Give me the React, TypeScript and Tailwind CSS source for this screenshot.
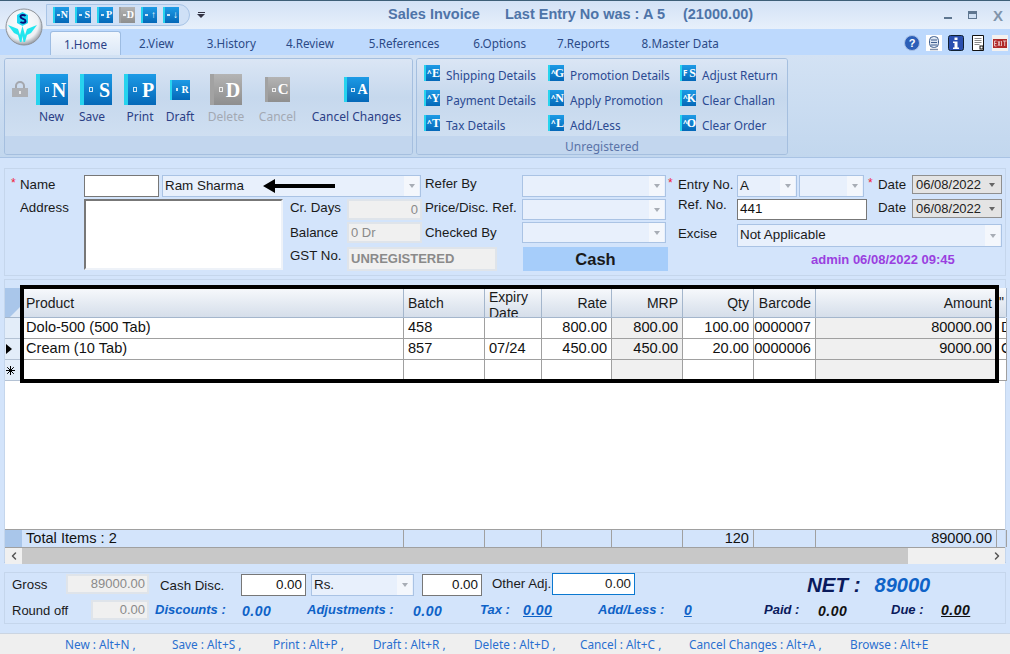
import React from "react";
import { ChevronLeft, ChevronRight } from "lucide-react";

const sans = "font-['Liberation_Sans',Arial,sans-serif]";
const ui = "font-['Noto_Sans',sans-serif]";

const Book = ({ letter, box, text, gray }: { letter: string; box: string; text: string; gray?: boolean }) => (
  <div className={`relative flex shrink-0 items-center justify-end overflow-hidden ${box} ${gray ? "bg-gradient-to-b from-[#b4b4b4] to-[#8e8e8e]" : "bg-gradient-to-b from-[#1d9be6] to-[#0568b8]"}`}>
    <div className={`absolute left-0 top-0 h-full w-[12%] ${gray ? "bg-[#a2a2a2]" : "bg-[#27d3ee]"}`} />
    <div className="absolute left-[28%] top-[43%] h-[16%] w-[14%] border border-white/80" />
    <span className={`pr-[6%] font-['Liberation_Serif',serif] font-bold leading-none text-white ${text}`}>{letter}</span>
  </div>
);

const BigButton = ({ label, letter, box, text, wrap, gray, labelBox = "" }: { label: string; letter: string; box: string; text: string; wrap: string; gray?: boolean; labelBox?: string }) => (
  <div className={`flex shrink-0 flex-col items-center ${wrap}`}>
    <div className="flex h-[31px] items-center">
      <Book letter={letter} box={box} text={text} gray={gray} />
    </div>
    <span className={`mt-[3px] whitespace-nowrap text-[12px] leading-[17px] ${gray ? "text-[#a3a9b3]" : "text-[#2b3f86]"} ${labelBox}`}>{label}</span>
  </div>
);

const SmallAction = ({ label, letter, hat = "^" }: { label: string; letter: string; hat?: string }) => (
  <div className="flex h-[16px] items-start">
    <div className="relative flex h-[16px] w-[16px] shrink-0 items-center justify-end overflow-hidden bg-gradient-to-b from-[#1d9be6] to-[#0568b8]">
      <div className="absolute left-0 top-0 h-full w-[2px] bg-[#27d3ee]" />
      <span className="absolute left-[3px] top-[1px] text-[8px] font-bold leading-[14px] text-white">{hat}</span>
      <span className="font-['Liberation_Serif',serif] text-[12px] font-bold leading-none text-white">{letter}</span>
    </div>
    <span className="ml-[6px] mt-[1px] whitespace-nowrap text-[11.8px] leading-[18px] text-[#2b4a92]">{label}</span>
  </div>
);

const Combo = ({ box, value = "" }: { box: string; value?: string }) => (
  <div className={`flex shrink-0 items-center justify-between border border-[#aac3e4] bg-[#e8f0fc] pl-[2px] pr-[1px] text-[13.4px] text-[#1a1a1a] ${box}`}>
    <span className="whitespace-nowrap">{value}</span>
    <span className="flex h-full w-[15px] items-center justify-center bg-[#f4f7fc]">
      <span className="h-0 w-0 border-x-[3px] border-t-[4px] border-x-transparent border-t-[#a8adb5]" />
    </span>
  </div>
);

const DateBox = ({ value }: { value: string }) => (
  <div className="flex h-[19px] w-[90px] shrink-0 items-center justify-between border border-[#8f8f8f] bg-[#e4e4e4] pl-[3px] pr-[6px] text-[13px] text-[#222]">
    <span>{value}</span>
    <span className="h-0 w-0 border-x-[3px] border-t-[4px] border-x-transparent border-t-[#666]" />
  </div>
);

const ReadOnly = ({ box, children }: { box: string; children: React.ReactNode }) => (
  <div className={`flex shrink-0 items-center border-2 border-[#dfe4ea] bg-[#f0f0f0] px-[2px] text-[13px] text-[#8a8a8a] ${box}`}>{children}</div>
);

const WhiteInput = ({ box, children }: { box: string; children?: React.ReactNode }) => (
  <div className={`flex shrink-0 items-center justify-end border border-[#777] bg-white pr-[3px] text-[13.4px] text-[#111] ${box}`}>{children}</div>
);

const Star = ({ box }: { box: string }) => <span className={`shrink-0 text-[12px] leading-[10px] text-[#f0203a] ${box}`}>*</span>;

const gridCols = "grid grid-cols-[17px_382px_81px_57px_70px_71px_71px_62px_181px_10px]";

const Head = ({ children, right, className = "" }: { children?: React.ReactNode; right?: boolean; className?: string }) => (
  <div className={`flex overflow-hidden border-r border-[#a4b6cc] bg-gradient-to-b from-[#f7f9fc] to-[#d5deea] px-[4px] text-[14px] text-[#1a1a1a] ${right ? "justify-end" : ""} ${className || "items-center pt-[1px]"}`}>{children}</div>
);

const Cell = ({ children, right, gray }: { children?: React.ReactNode; right?: boolean; gray?: boolean }) => (
  <div className={`flex h-[21px] items-center overflow-hidden whitespace-nowrap border-b border-r border-[#a0a0a0] pb-[1px] text-[14.6px] text-[#111] ${right ? "justify-end pr-[4px]" : "pl-[4px]"} ${gray ? "bg-[#f0f0f0]" : "bg-white"}`}>{children}</div>
);

const RowHead = ({ children }: { children?: React.ReactNode }) => (
  <div className="flex h-[21px] items-center justify-start border-b border-r border-[#b4c2d4] bg-[#e3edf9] pl-[1px] text-[#111]">{children}</div>
);

const Foot = ({ children, right }: { children?: React.ReactNode; right?: boolean }) => (
  <div className={`flex h-[17px] items-center overflow-hidden whitespace-nowrap border-r border-[#a0a0a0] text-[14.6px] leading-none text-[#111] ${right ? "justify-end pr-[4px]" : "pl-[4px]"}`}>{children}</div>
);

const rows = [
  { product: "Dolo-500 (500 Tab)", batch: "458", expiry: "", rate: "800.00", mrp: "800.00", qty: "100.00", code: "0000007", amount: "80000.00", extra: "D" },
  { product: "Cream (10 Tab)", batch: "857", expiry: "07/24", rate: "450.00", mrp: "450.00", qty: "20.00", code: "0000006", amount: "9000.00", extra: "C" },
  { product: "", batch: "", expiry: "", rate: "", mrp: "", qty: "", code: "", amount: "", extra: "" },
];

const tabs = [
  { label: "2.View", box: "ml-[18px]" },
  { label: "3.History", box: "ml-[33px]" },
  { label: "4.Review", box: "ml-[30px]" },
  { label: "5.References", box: "ml-[35px]" },
  { label: "6.Options", box: "ml-[34px]" },
  { label: "7.Reports", box: "ml-[31px]" },
  { label: "8.Master Data", box: "ml-[32px]" },
];

const shortcuts = [
  { label: "New : Alt+N ,", box: "w-[107px]" },
  { label: "Save : Alt+S ,", box: "w-[101px]" },
  { label: "Print : Alt+P ,", box: "w-[100px]" },
  { label: "Draft : Alt+R ,", box: "w-[101px]" },
  { label: "Delete : Alt+D ,", box: "w-[106px]" },
  { label: "Cancel : Alt+C ,", box: "w-[109px]" },
  { label: "Cancel Changes : Alt+A ,", box: "w-[161px]" },
  { label: "Browse : Alt+E", box: "" },
];

const Logo = () => (
  <svg width="38" height="38" viewBox="0 0 38 38" className="absolute left-[5px] top-[8px]">
    <defs>
      <radialGradient id="ball" cx="45%" cy="40%" r="60%">
        <stop offset="0%" stopColor="#ffffff" />
        <stop offset="75%" stopColor="#eef1f5" />
        <stop offset="100%" stopColor="#9aa0a8" />
      </radialGradient>
    </defs>
    <circle cx="19" cy="19" r="18" fill="url(#ball)" stroke="#8d9299" strokeWidth="1" />
    <path d="M17.5 4l5.500 3v8l-5.500 3-5.500-3V7z" fill="#1dd6f2" />
    <path d="M20.500 8c-1-1.500-5-1.500-5 .8 0 2.600 5 1.600 5 4.200 0 2.300-4 2.300-5 .8" fill="none" stroke="#06107a" strokeWidth="2" />
    <path d="M3 17L13 21 15 27 17.500 18 20 27 22 21 32 17 26 25 22 27 20 34H18.500L17.500 28 16.500 34H15L13 27 9 25z" fill="#22e6ee" />
  </svg>
);

const Triangle = () => <div className="h-0 w-0 border-y-[5.5px] border-l-[6px] border-y-transparent border-l-black" />;

const QatIcon = ({ letter, gray }: { letter: string; gray?: boolean }) => <Book letter={letter} box="h-[16px] w-[16px]" text="text-[10px]" gray={gray} />;

export default function App() {
  return (
    <div className={`relative flex h-[654px] w-[1010px] flex-col overflow-hidden bg-[#d3e4fb] ${sans}`}>
      {/* title bar */}
      <div className="flex h-[29px] shrink-0 items-center border-t border-[#3d5f78] bg-gradient-to-b from-[#d3e2f6] to-[#e7f0fb] pl-[46px]">
        <div className="flex h-[22px] w-[144px] items-center gap-[6px] rounded-r-full border border-[#a8c4e6] bg-[#cfe0f6] pl-[6px]">
          <QatIcon letter="N" />
          <QatIcon letter="S" />
          <QatIcon letter="P" />
          <QatIcon letter="D" gray />
          <QatIcon letter="↑" />
          <QatIcon letter="↓" />
        </div>
        <div className="ml-[7px] flex flex-col items-center gap-[1px]">
          <div className="h-[1px] w-[7px] bg-[#334]" />
          <div className="h-0 w-0 border-x-[4px] border-t-[4px] border-x-transparent border-t-[#334]" />
        </div>
        <span className="ml-[183px] whitespace-nowrap text-[14.5px] font-bold text-[#4e74a8]">Sales Invoice</span>
        <span className="ml-[25px] whitespace-nowrap text-[14.5px] font-bold text-[#4e74a8]">Last Entry No was : A 5</span>
        <span className="ml-[18px] whitespace-nowrap text-[14.5px] font-bold text-[#4e74a8]">(21000.00)</span>
        <div className="ml-auto mr-[7px] flex items-center gap-[16px]">
          <div className="mt-[6px] h-[2px] w-[8px] bg-[#5e7690]" />
          <div className="h-[8px] w-[9px] border border-t-[3px] border-[#5e7690] bg-[#cfdff3]" />
          <span className="text-[15px] font-bold leading-none text-[#7f94ab]">X</span>
        </div>
      </div>

      {/* tabs */}
      <div className={`flex h-[26px] shrink-0 items-end bg-[#bdd9fd] pl-[50px] text-[11.7px] text-[#2b4a86] ${ui}`}>
        <div className="flex h-[24px] w-[71px] items-center justify-center rounded-t-[3px] border border-b-0 border-[#9dbce2] bg-gradient-to-b from-[#f2f7fd] to-[#dce8f7] pt-[2px] text-[#2b3f86]">1.Home</div>
        {tabs.map((t) => (
          <span key={t.label} className={`flex h-[24px] items-center whitespace-nowrap pt-[2px] ${t.box}`}>{t.label}</span>
        ))}
        <div className="mb-[4px] ml-auto mr-[2px] flex items-center gap-[6px]">
          <svg width="16" height="16" viewBox="0 0 16 16">
            <circle cx="8" cy="8" r="7.500" fill="#2c5fb8" stroke="#a9c0e4" />
            <text x="8" y="12" textAnchor="middle" fontSize="11" fontWeight="700" fill="#fff" fontFamily="Liberation Sans">?</text>
          </svg>
          <svg width="16" height="16" viewBox="0 0 16 16">
            <rect width="16" height="16" fill="#fff" />
            <rect x="3.500" y="1.500" width="9" height="11" rx="4" fill="#dde6f2" stroke="#3f5f8f" />
            <path d="M5 5h6M5 7.500h6M5 10h6" stroke="#3f5f8f" />
            <path d="M4 14.500h8" stroke="#7f8fa8" strokeWidth="1.500" />
          </svg>
          <svg width="16" height="16" viewBox="0 0 16 16">
            <rect x=".5" y=".5" width="15" height="15" rx="2" fill="#2a4fb0" stroke="#123" />
            <rect x="6.500" y="2.500" width="3" height="2.500" fill="#fff" />
            <path d="M5 6.500h4.500v6H11v1.500H5v-1.500h1.500V8H5z" fill="#fff" />
          </svg>
          <svg width="16" height="16" viewBox="0 0 16 16">
            <path d="M2.500 .5h11v15h-11z" fill="#fff" stroke="#111" />
            <path d="M4.500 3.500h7M4.500 5.500h7M4.500 7.500h7M4.500 9.500h5" stroke="#888" />
            <rect x="10" y="11" width="3" height="3" fill="#fff" stroke="#111" />
          </svg>
          <svg width="16" height="16" viewBox="0 0 16 16">
            <rect width="16" height="16" fill="#f4f1ef" />
            <rect x="1" y="4" width="14" height="9" fill="#b02a2a" />
            <path d="M2.500 6v5h2M2.500 8.500h2M2.500 6h2M6 6l2 5M8 6l-2 5M9.500 6v5M11 6h3.500M12.700 6v5" stroke="#f3dede" strokeWidth=".8" fill="none" />
          </svg>
        </div>
      </div>

      {/* ribbon */}
      <div className={`flex h-[103px] shrink-0 gap-[3px] border-b border-[#a9c3e4] bg-gradient-to-b from-[#d3e2f4] to-[#c2d7ee] px-[4px] pt-[3px] ${ui}`}>
        <div className="flex h-[97px] w-[409px] shrink-0 flex-col overflow-hidden rounded-[3px] border border-[#a5bfdf]">
          <div className="flex h-[78px] bg-gradient-to-b from-[#dbe6f5] via-[#c6d8ed] to-[#cfdff1] pl-[7px] pt-[15px]">
            <svg width="16" height="16" viewBox="0 0 16 16" className="mr-[8px] mt-[7px] shrink-0">
              <path d="M4 8V5a4 4 0 0 1 8 0v3" fill="none" stroke="#a4a7ad" strokeWidth="2" />
              <rect x="0" y="7" width="16" height="9" fill="#adb0b5" />
              <rect x="7" y="10" width="2" height="3" fill="#e4e6e9" />
            </svg>
            <BigButton label="New" letter="N" box="h-[31px] w-[32px]" text="text-[20px]" wrap="w-[32px]" labelBox="-ml-[1px]" />
            <div className="w-[12px]" />
            <BigButton label="Save" letter="S" box="h-[31px] w-[32px]" text="text-[20px]" wrap="w-[32px]" labelBox="-ml-[8px]" />
            <div className="w-[12px]" />
            <BigButton label="Print" letter="P" box="h-[31px] w-[32px]" text="text-[20px]" wrap="w-[32px]" />
            <div className="w-[14px]" />
            <BigButton label="Draft" letter="R" box="h-[20px] w-[20px]" text="text-[10px]" wrap="w-[20px]" />
            <div className="w-[20px]" />
            <BigButton label="Delete" letter="D" box="h-[31px] w-[32px]" text="text-[20px]" wrap="w-[32px]" gray />
            <div className="w-[23px]" />
            <BigButton label="Cancel" letter="C" box="h-[25px] w-[25px]" text="text-[15px]" wrap="w-[25px]" gray />
            <div className="w-[54px]" />
            <BigButton label="Cancel Changes" letter="A" box="h-[25px] w-[25px]" text="text-[14px]" wrap="w-[25px]" />
          </div>
          <div className="h-[18px] bg-[#c2d6ee]" />
        </div>
        <div className="flex h-[97px] w-[372px] shrink-0 flex-col overflow-hidden rounded-[3px] border border-[#a5bfdf]">
          <div className="flex h-[78px] gap-[8px] bg-gradient-to-b from-[#dbe6f5] via-[#c6d8ed] to-[#cfdff1] pl-[7px] pt-[6px]">
            <div className="flex w-[116px] flex-col gap-[9px]">
              <SmallAction label="Shipping Details" letter="E" />
              <SmallAction label="Payment Details" letter="Y" />
              <SmallAction label="Tax Details" letter="T" />
            </div>
            <div className="flex w-[124px] flex-col gap-[9px]">
              <SmallAction label="Promotion Details" letter="G" />
              <SmallAction label="Apply Promotion" letter="N" />
              <SmallAction label="Add/Less" letter="L" />
            </div>
            <div className="flex flex-col gap-[9px]">
              <SmallAction label="Adjust Return" letter="S" hat="F" />
              <SmallAction label="Clear Challan" letter="K" />
              <SmallAction label="Clear Order" letter="O" />
            </div>
          </div>
          <div className="h-[18px] overflow-visible bg-[#c2d6ee] text-center text-[12px] leading-[22px] text-[#5a74a8]">Unregistered</div>
        </div>
      </div>

      {/* party + entry form */}
      <div className="mx-[4px] mt-[10px] h-[108px] shrink-0 border border-[#c5d6ec] pl-[6px] pt-[6px] text-[13.3px] text-[#1a1a1a]">
        <div className="flex h-[22px] items-start">
          <Star box="mt-[3px] w-[9px]" />
          <span className="w-[64px]">Name</span>
          <WhiteInput box="h-[22px] w-[75px]" />
          <div className="w-[3px]" />
          <Combo box="h-[22px] w-[259px]" value="Ram Sharma" />
          <span className="ml-[4px] mt-[-1px] w-[97px]">Refer By</span>
          <Combo box="h-[22px] w-[144px]" />
          <Star box="ml-[2px] mt-[3px] w-[10px]" />
          <span className="w-[59px]">Entry No.</span>
          <Combo box="h-[22px] w-[60px]" value="A" />
          <div className="w-[2px]" />
          <Combo box="h-[22px] w-[65px]" />
          <Star box="ml-[4px] mt-[3px] w-[10px]" />
          <span className="w-[34px]">Date</span>
          <DateBox value="06/08/2022" />
        </div>
        <div className="mt-[2px] flex">
          <span className="ml-[9px] mt-[-1px] w-[64px]">Address</span>
          <div className="h-[71px] w-[199px] shrink-0 border-2 border-b-[#eef2f8] border-l-[#777] border-r-[#eef2f8] border-t-[#777] bg-white" />
          <div className="ml-[7px] flex w-[378px] shrink-0 flex-col">
            <div className="flex h-[21px]">
              <span className="mt-[-1px] w-[57px]">Cr. Days</span>
              <ReadOnly box="h-[21px] w-[75px] justify-end">0</ReadOnly>
              <span className="ml-[3px] mt-[-1px] w-[97px] whitespace-nowrap">Price/Disc. Ref.</span>
              <Combo box="h-[21px] w-[144px]" />
            </div>
            <div className="mt-[2px] flex h-[21px]">
              <span className="mt-[1px] w-[57px]">Balance</span>
              <ReadOnly box="h-[21px] w-[75px]">0 Dr</ReadOnly>
              <span className="ml-[3px] mt-[1px] w-[97px]">Checked By</span>
              <Combo box="h-[21px] w-[144px]" />
            </div>
            <div className="mt-[4px] flex h-[24px]">
              <span className="mt-[-1px] w-[57px]">GST No.</span>
              <ReadOnly box="h-[24px] w-[150px] text-[11px] font-bold">UNREGISTERED</ReadOnly>
              <div className="ml-[26px] flex h-[24px] w-[145px] items-center justify-center bg-[#a6cdfa] text-[16.5px] font-bold text-[#1a1a1a]">Cash</div>
            </div>
          </div>
          <div className="ml-[10px] flex flex-col">
            <div className="flex h-[21px]">
              <span className="mt-[-4px] w-[59px]">Ref. No.</span>
              <WhiteInput box="h-[21px] w-[130px] justify-start pl-[2px]">441</WhiteInput>
              <span className="ml-[11px] mt-[-1px] w-[34px]">Date</span>
              <DateBox value="06/08/2022" />
            </div>
            <div className="mt-[4px] flex h-[23px]">
              <span className="w-[59px]">Excise</span>
              <Combo box="h-[23px] w-[265px]" value="Not Applicable" />
            </div>
            <div className="mt-[4px] whitespace-nowrap pl-[133px] text-[13px] font-bold leading-[18px] text-[#9a3fe0]">admin 06/08/2022 09:45</div>
          </div>
        </div>
      </div>

      {/* items grid */}
      <div className="mx-[4px] mt-[3px] h-[284px] shrink-0 border border-[#c5d6ec] border-b-[#a9c3e4] pt-[8px]">
        <div className={`${gridCols} h-[30px] border-b border-[#a4b6cc]`}>
          <div className="relative overflow-hidden bg-[#a9c6ea]">
            <div className="absolute bottom-0 right-0 h-0 w-0 border-b-[12px] border-l-[12px] border-b-[#dfe9f6] border-l-transparent" />
          </div>
          <Head>Product</Head>
          <Head>Batch</Head>
          <Head className="items-start pt-[1px] leading-[16px]">Expiry Date</Head>
          <Head right>Rate</Head>
          <Head right>MRP</Head>
          <Head right>Qty</Head>
          <Head right>Barcode</Head>
          <Head right>Amount</Head>
          <Head className="items-center pl-[2px]">"</Head>
        </div>
        {rows.map((r, i) => (
          <div key={i} className={gridCols}>
            <RowHead>
              {i === 1 && <Triangle />}
              {i === 2 && (
                <svg width="9" height="9" viewBox="0 0 9 9">
                  <path d="M4.500 0v9M0 4.500h9M1.200 1.200l6.600 6.600M7.800 1.200l-6.600 6.600" stroke="#000" strokeWidth="1" />
                </svg>
              )}
            </RowHead>
            <Cell>{r.product}</Cell>
            <Cell>{r.batch}</Cell>
            <Cell>{r.expiry}</Cell>
            <Cell right>{r.rate}</Cell>
            <Cell right gray>{r.mrp}</Cell>
            <Cell right>{r.qty}</Cell>
            <Cell right>{r.code}</Cell>
            <Cell right gray>{r.amount}</Cell>
            <Cell>{r.extra}</Cell>
          </div>
        ))}
        <div className="h-[148px] bg-white" />
        <div className={`${gridCols} border-b border-t border-[#a0a0a0] bg-[#d3e4fb]`}>
          <div className="h-[17px] bg-[#a9c6ea]" />
          <Foot>Total Items : 2</Foot>
          <Foot />
          <Foot />
          <Foot />
          <Foot />
          <Foot right>120</Foot>
          <Foot />
          <Foot right>89000.00</Foot>
          <Foot />
        </div>
        <div className="flex h-[16px] items-center bg-[#f0f0f0]">
          <div className="flex w-[17px] justify-center"><ChevronLeft size={12} strokeWidth={3} className="text-[#555]" /></div>
          <div className="h-full w-[886px] bg-[#c8c8c8]" />
          <div className="ml-auto flex w-[17px] justify-center"><ChevronRight size={12} strokeWidth={3} className="text-[#555]" /></div>
        </div>
      </div>

      {/* totals */}
      <div className="mx-[4px] mt-[9px] h-[52px] shrink-0 border border-[#c5d6ec] pl-[7px] pt-[1px] text-[13.3px] text-[#1a1a1a]">
        <div className="flex h-[24px] items-start">
          <span className="mt-[1px] w-[54px]">Gross</span>
          <ReadOnly box="h-[20px] w-[83px] justify-end">89000.00</ReadOnly>
          <span className="ml-[11px] mt-[2px] w-[81px]">Cash Disc.</span>
          <WhiteInput box="h-[22px] w-[65px]">0.00</WhiteInput>
          <div className="w-[5px]" />
          <Combo box="h-[22px] w-[103px]" value="Rs." />
          <div className="w-[8px]" />
          <WhiteInput box="h-[22px] w-[60px]">0.00</WhiteInput>
          <span className="ml-[10px] w-[60px] whitespace-nowrap">Other Adj.</span>
          <div className="mt-[-1px] flex h-[22px] w-[83px] shrink-0 items-center justify-end border border-[#0b78d0] bg-white pr-[3px]">0.00</div>
          <span className="ml-[172px] mt-[-4px] text-[20.5px] font-bold italic text-[#0a1a5c]">NET :</span>
          <span className="ml-[14px] mt-[-4px] text-[20px] font-bold italic text-[#0e62c7]">89000</span>
        </div>
        <div className="mt-[2px] flex h-[20px] items-start text-[13px] font-bold italic">
          <span className="mt-[1px] w-[79px] font-normal not-italic">Round off</span>
          <ReadOnly box="h-[20px] w-[58px] justify-end font-normal not-italic">0.00</ReadOnly>
          <span className="ml-[6px] w-[87px] text-[#0e62c7]">Discounts :</span>
          <span className="mt-[1px] w-[65px] text-[14px] tracking-[0.5px] text-[#0e62c7]">0.00</span>
          <span className="w-[106px] text-[#0e62c7]">Adjustments :</span>
          <span className="mt-[1px] w-[67px] text-[14px] tracking-[0.5px] text-[#0e62c7]">0.00</span>
          <span className="w-[43px] text-[#0e62c7]">Tax :</span>
          <span className="w-[75px] text-[14px] tracking-[0.5px] text-[#0e62c7] underline">0.00</span>
          <span className="w-[86px] text-[#0e62c7]">Add/Less :</span>
          <span className="w-[80px] text-[14px] text-[#0e62c7] underline">0</span>
          <span className="w-[54px] text-[#0a1a5c]">Paid :</span>
          <span className="mt-[1px] w-[73px] text-[14px] tracking-[0.5px] text-[#111]">0.00</span>
          <span className="w-[50px] text-[#0a1a5c]">Due :</span>
          <span className="text-[14px] tracking-[0.5px] text-[#111] underline">0.00</span>
        </div>
      </div>

      {/* shortcuts */}
      <div className={`mt-[9px] flex h-[21px] shrink-0 items-center border-t border-[#cbd5e2] bg-[#efefef] pl-[65px] pt-[1px] text-[11.8px] text-[#2a6fd0] ${ui}`}>
        {shortcuts.map((s) => (
          <span key={s.label} className={`shrink-0 whitespace-nowrap ${s.box}`}>{s.label}</span>
        ))}
      </div>

      {/* overlays: logo, annotation arrow and highlight frame */}
      <Logo />
      <svg width="72" height="14" viewBox="0 0 72 14" className="absolute left-[263px] top-[179px]">
        <path d="M72 5v4H12v5L0 7l12-7v5z" fill="#000" />
      </svg>
      <div className="pointer-events-none absolute left-[20px] top-[285px] h-[98px] w-[979px] border-[4px] border-black" />
    </div>
  );
}
